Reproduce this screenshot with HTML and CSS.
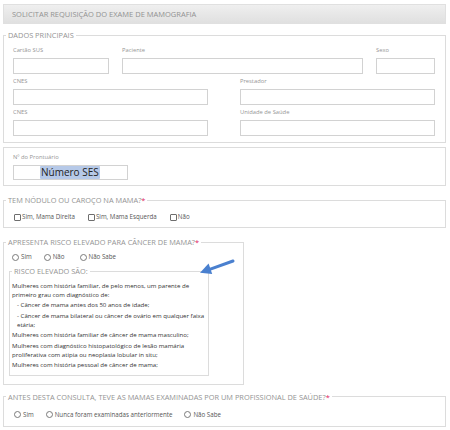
FILE: index.html
```html
<!DOCTYPE html>
<html lang="pt-BR">
<head>
<meta charset="utf-8">
<title>Solicitar requisição do exame de mamografia</title>
<link rel="stylesheet" href="styles.css">
</head>
<body>
<div class="page">
  <div class="title">SOLICITAR REQUISIÇÃO DO EXAME DE MAMOGRAFIA</div>

  <fieldset class="group main">
    <legend>DADOS PRINCIPAIS</legend>
    <div class="row row3">
      <label class="field"><span class="lbl">Cartão SUS</span><input class="inp" type="text"></label>
      <label class="field"><span class="lbl">Paciente</span><input class="inp" type="text"></label>
      <label class="field"><span class="lbl">Sexo</span><input class="inp" type="text"></label>
    </div>
    <div class="row row2">
      <label class="field"><span class="lbl">CNES</span><input class="inp" type="text"></label>
      <label class="field"><span class="lbl">Prestador</span><input class="inp" type="text"></label>
    </div>
    <div class="row row2">
      <label class="field"><span class="lbl">CNES</span><input class="inp" type="text"></label>
      <label class="field"><span class="lbl">Unidade de Saúde</span><input class="inp" type="text"></label>
    </div>
  </fieldset>

  <div class="box pront">
    <div class="field">
      <span class="lbl">Nº do Prontuário</span>
      <div class="inp pron-inp"><span class="hl">Número SES</span></div>
    </div>
  </div>

  <fieldset class="group nodulo">
    <legend>TEM NÓDULO OU CAROÇO NA MAMA?<span class="req">*</span></legend>
    <div class="opts opts-nod">
      <label class="opt"><input type="checkbox" class="cb"><span>Sim, Mama Direita</span></label>
      <label class="opt"><input type="checkbox" class="cb"><span>Sim, Mama Esquerda</span></label>
      <label class="opt"><input type="checkbox" class="cb"><span>Não</span></label>
    </div>
  </fieldset>

  <fieldset class="group risco">
    <legend>APRESENTA RISCO ELEVADO PARA CÂNCER DE MAMA?<span class="req">*</span></legend>
    <div class="opts opts-risco">
      <label class="opt"><input type="radio" name="risco" class="rd"><span>Sim</span></label>
      <label class="opt"><input type="radio" name="risco" class="rd"><span>Não</span></label>
      <label class="opt"><input type="radio" name="risco" class="rd"><span>Não Sabe</span></label>
    </div>
    <fieldset class="inner">
      <legend>RISCO ELEVADO SÃO:</legend>
      <p>Mulheres com história familiar, de pelo menos, um parente de primeiro grau com diagnóstico de:</p>
      <p class="ind">- Câncer de mama antes dos 50 anos de idade;</p>
      <p class="ind"><span class="nw">- Câncer de mama bilateral ou câncer de ovário em qualquer faixa</span> etária;</p>
      <p>Mulheres com história familiar de câncer de mama masculino;</p>
      <p>Mulheres com diagnóstico histopatológico de lesão mamária proliferativa com atipia ou neoplasia lobular in situ;</p>
      <p>Mulheres com história pessoal de câncer de mama;</p>
    </fieldset>
  </fieldset>

  <fieldset class="group antes">
    <legend>ANTES DESTA CONSULTA, TEVE AS MAMAS EXAMINADAS POR UM PROFISSIONAL DE SAÚDE?<span class="req">*</span></legend>
    <div class="opts opts-antes">
      <label class="opt"><input type="radio" name="antes" class="rd"><span>Sim</span></label>
      <label class="opt"><input type="radio" name="antes" class="rd"><span>Nunca foram examinadas anteriormente</span></label>
      <label class="opt"><input type="radio" name="antes" class="rd"><span>Não Sabe</span></label>
    </div>
  </fieldset>

  <svg class="arrow" width="45" height="24" viewBox="0 0 45 24" aria-hidden="true">
    <line x1="38" y1="6" x2="14" y2="14.6" stroke="#4a80cf" stroke-width="3" stroke-linecap="round"/>
    <polygon points="5,17.8 17.2,19 13.6,8.6" fill="#4a80cf"/>
  </svg>
</div>
</body>
</html>
```

FILE: styles.css
```css
* { box-sizing: border-box; }

body {
  margin: 0;
  background: #fff;
  font-family: "Open Sans", "Noto Sans", sans-serif;
  color: #555;
}

.page {
  position: relative;
  width: 450px;
  padding: 4px 0 0 3px;
}

.title {
  width: 443px;
  height: 20px;
  background: linear-gradient(#efefef, #e0e0e0);
  border: 1px solid #e0e0e0;
  color: #929292;
  font-size: 7.5px;
  line-height: 18px;
  padding-left: 8px;
}

fieldset {
  margin: 0;
  min-width: 0;
  border: 1px solid #dcdcdc;
}

legend {
  font-size: 7.4px;
  line-height: 10px;
  color: #949494;
  padding: 0 2px;
}

.req {
  color: #e0245e;
}

.group {
  width: 443px;
  padding: 0;
}

.main {
  margin-top: 6px;
  padding: 6px 10px 6px 9px;
  display: flex;
  flex-direction: column;
  gap: 3px;
}

.main > legend { margin-left: -7px; }

.row {
  display: grid;
}

.row3 {
  grid-template-columns: 96px 241px 59px;
  column-gap: 13px;
}

.row2 {
  grid-template-columns: 195px 195px;
  column-gap: 32px;
}

.field {
  display: flex;
  flex-direction: column;
}

.lbl {
  display: block;
  font-size: 5.8px;
  line-height: 9px;
  color: #959595;
  margin-bottom: 3px;
}

.inp {
  display: block;
  width: 100%;
  height: 16px;
  margin: 0;
  border: 1px solid #d2d2d2;
  background: #fff;
  padding: 0;
}

.box {
  width: 443px;
  border: 1px solid #dcdcdc;
}

.pront {
  margin-top: 4px;
  padding: 5px 9px 5px 9px;
}

.pron-inp {
  width: 115px;
  height: 15px;
  display: flex;
  align-items: center;
  padding-left: 26px;
}

.hl {
  background: #b6c9e8;
  color: #222;
  font-size: 10px;
  line-height: 13px;
  padding: 0 1px;
  border-radius: 1px;
}

.opts {
  display: flex;
  align-items: center;
  height: 10px;
}

.opt {
  display: flex;
  align-items: center;
  font-size: 6.2px;
  line-height: 10px;
  color: #555;
}

.cb, .rd {
  appearance: none;
  -webkit-appearance: none;
  margin: 0 1px 0 0;
  width: 7px;
  height: 7px;
  border: 1px solid #6e6e6e;
  background: #fff;
  flex: none;
}

.cb { border-radius: 1px; }
.rd { border-radius: 50%; border-color: #7a7a7a; }

.nodulo {
  margin-top: 9px;
  padding: 7px 10px 5px 10px;
}

.nodulo > legend { margin-left: -8px; }

.opts-nod { gap: 13px; }

.risco {
  width: 241px;
  margin-top: 9px;
  padding: 5px 5px 7.5px 5px;
}

.risco > legend { margin-left: -3px; }

.opts-risco {
  gap: 12px;
  padding-left: 3px;
}

.opts-risco .rd { margin-right: 2px; }
.opts-risco .opt:last-child { margin-left: 3px; }

.inner {
  width: 200px;
  margin-top: 4px;
  padding: 4.5px 1px 6px 2px;
}

.inner > legend { margin-left: 0; }

.inner p {
  margin: 0 0 1.5px;
  font-size: 6.1px;
  line-height: 9px;
  color: #333;
}

.inner p:last-child { margin-bottom: 0; }

.inner p.ind { padding-left: 5px; }

.nw { white-space: nowrap; }

.antes {
  margin-top: 7px;
  padding: 8px 10px 6px 10px;
}

.antes > legend { margin-left: -8px; }

.opts-antes { gap: 12px; }
.opts-antes .rd { margin-right: 2px; }

.arrow {
  position: absolute;
  left: 195px;
  top: 255px;
}
```
